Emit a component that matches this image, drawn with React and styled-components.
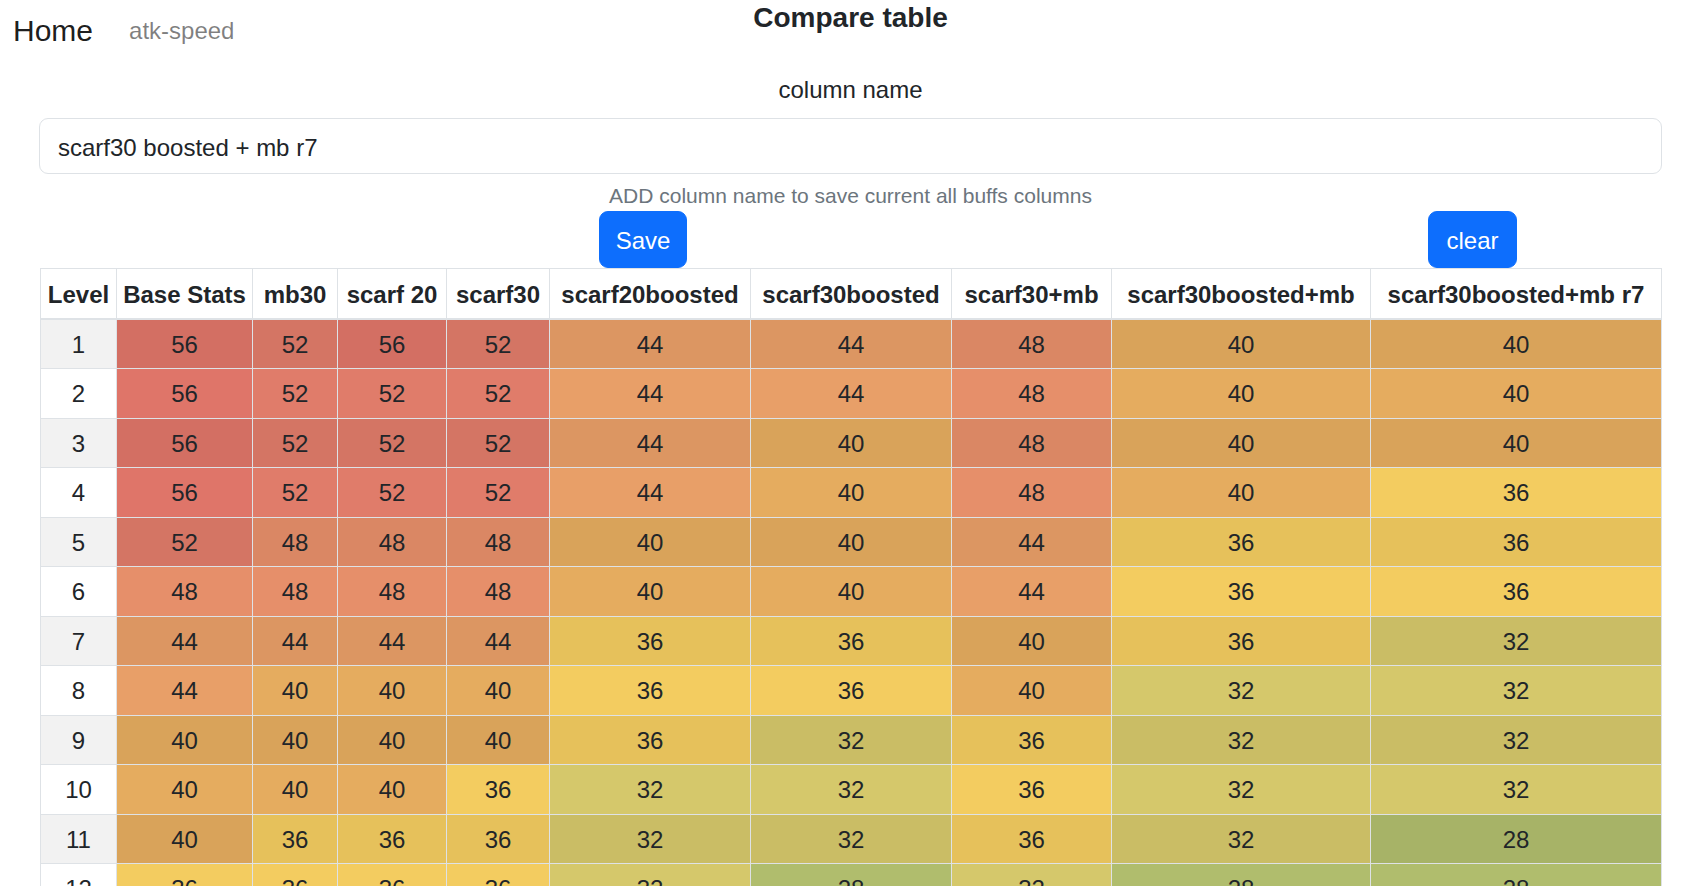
import React from "react";
import styled, { createGlobalStyle } from "styled-components";

const GlobalStyle = createGlobalStyle`
  html { overflow: hidden; }
  body {
    margin: 0;
    background: #fff;
    color: #212529;
    font-family: "Liberation Sans", Arial, sans-serif;
    font-size: 24px;
    line-height: 1.5;
  }
  *, *::before, *::after { box-sizing: border-box; }
`;

const TopBar = styled.header`
  display: grid;
  grid-template-columns: 1fr auto 1fr;
  align-items: start;
  padding-right: 3px;
  height: 53px;
`;

const Nav = styled.nav`
  display: flex;
  align-items: center;
  gap: 36px;
  padding: 8px 0 0 13px;
`;

const Brand = styled.a`
  font-size: 30px;
  line-height: 45px;
  color: rgba(0, 0, 0, 0.9);
  text-decoration: none;
`;

const NavLink = styled.a`
  font-size: 24px;
  line-height: 36px;
  color: rgba(0, 0, 0, 0.5);
  text-decoration: none;
`;

const Title = styled.h5`
  margin: 0;
  padding-top: 1px;
  font-size: 28px;
  line-height: 34px;
  font-weight: 700;
  color: #212529;
  text-align: center;
`;

const Main = styled.main`
  display: flex;
  flex-direction: column;
  padding: 19px 42px 0 39px;
`;

const FieldLabel = styled.label`
  display: block;
  text-align: center;
  font-size: 24px;
  line-height: 36px;
  margin-bottom: 10px;
`;

const TextInput = styled.input`
  display: block;
  width: 100%;
  height: 56px;
  padding: 11px 18px 7px;
  font-family: inherit;
  font-size: 24px;
  line-height: 36px;
  color: #212529;
  background: #fff;
  border: 1px solid #dee2e6;
  border-radius: 9px;
  outline: none;
`;

const HelpText = styled.div`
  margin-top: 6px;
  text-align: center;
  font-size: 21px;
  line-height: 31px;
  color: #6c757d;
`;

const ButtonRow = styled.div`
  display: flex;
  justify-content: space-between;
  padding: 0 145px 0 560px;
`;

const Button = styled.button`
  width: ${(p) => p.$w}px;
  height: 57px;
  padding: 2px 0 0;
  font-family: inherit;
  font-size: 24px;
  line-height: 36px;
  color: #fff;
  background: #0d6efd;
  border: 1px solid #0d6efd;
  border-radius: 9px;
  cursor: pointer;
`;

const Table = styled.table`
  width: calc(100% - 2px);
  margin: 0 1px;
  table-layout: fixed;
  border-collapse: collapse;
  font-size: 24px;
`;

const Col = styled.col`
  width: ${(p) => p.$w}px;
`;

const Th = styled.th`
  padding: 7px 6px 5px;
  line-height: 37px;
  font-weight: 700;
  text-align: center;
  white-space: nowrap;
  background: #fff;
  border: 1px solid #dee2e6;
  border-bottom-width: 2px;
`;

const Td = styled.td`
  padding: 7px 6px 5px;
  line-height: 36.45px;
  text-align: center;
  color: #212529;
  background: ${(p) => p.$bg || "#fff"};
  border: 1px solid #dee2e6;
  box-shadow: ${(p) =>
    p.$striped ? "inset 0 0 0 9999px rgba(0, 0, 0, 0.05)" : "none"};
`;

const COLUMNS = [
  { name: "Level", w: 76 },
  { name: "Base Stats", w: 136 },
  { name: "mb30", w: 85 },
  { name: "scarf 20", w: 109 },
  { name: "scarf30", w: 103 },
  { name: "scarf20boosted", w: 201 },
  { name: "scarf30boosted", w: 201 },
  { name: "scarf30+mb", w: 160 },
  { name: "scarf30boosted+mb", w: 259 },
  { name: "scarf30boosted+mb r7", w: 291 },
];

const ROWS = [
  [56, 52, 56, 52, 44, 44, 48, 40, 40],
  [56, 52, 52, 52, 44, 44, 48, 40, 40],
  [56, 52, 52, 52, 44, 40, 48, 40, 40],
  [56, 52, 52, 52, 44, 40, 48, 40, 36],
  [52, 48, 48, 48, 40, 40, 44, 36, 36],
  [48, 48, 48, 48, 40, 40, 44, 36, 36],
  [44, 44, 44, 44, 36, 36, 40, 36, 32],
  [44, 40, 40, 40, 36, 36, 40, 32, 32],
  [40, 40, 40, 40, 36, 32, 36, 32, 32],
  [40, 40, 40, 36, 32, 32, 36, 32, 32],
  [40, 36, 36, 36, 32, 32, 36, 32, 28],
  [36, 36, 36, 36, 32, 28, 32, 28, 28],
];

const SHADE = {
  56: "#df7569",
  52: "#e07c6a",
  48: "#e68f6a",
  44: "#e89f68",
  40: "#e5ac5f",
  36: "#f3cc60",
  32: "#d5c86b",
  28: "#b0bd6d",
};

export default function App() {
  return (
    <>
      <GlobalStyle />
      <TopBar>
        <Nav>
          <Brand href="#">Home</Brand>
          <NavLink href="#">atk-speed</NavLink>
        </Nav>
        <Title>Compare table</Title>
        <div />
      </TopBar>
      <Main>
        <FieldLabel htmlFor="colname">column name</FieldLabel>
        <TextInput id="colname" defaultValue="scarf30 boosted + mb r7" />
        <HelpText>ADD column name to save current all buffs columns</HelpText>
        <ButtonRow>
          <Button $w={88}>Save</Button>
          <Button $w={89}>clear</Button>
        </ButtonRow>
        <Table>
          <colgroup>
            {COLUMNS.map((c) => (
              <Col key={c.name} $w={c.w} />
            ))}
          </colgroup>
          <thead>
            <tr>
              {COLUMNS.map((c) => (
                <Th key={c.name}>{c.name}</Th>
              ))}
            </tr>
          </thead>
          <tbody>
            {ROWS.map((row, i) => {
              const striped = i % 2 === 0;
              return (
                <tr key={i}>
                  <Td $striped={striped}>{i + 1}</Td>
                  {row.map((v, j) => (
                    <Td key={j} $bg={SHADE[v]} $striped={striped}>
                      {v}
                    </Td>
                  ))}
                </tr>
              );
            })}
          </tbody>
        </Table>
      </Main>
    </>
  );
}
